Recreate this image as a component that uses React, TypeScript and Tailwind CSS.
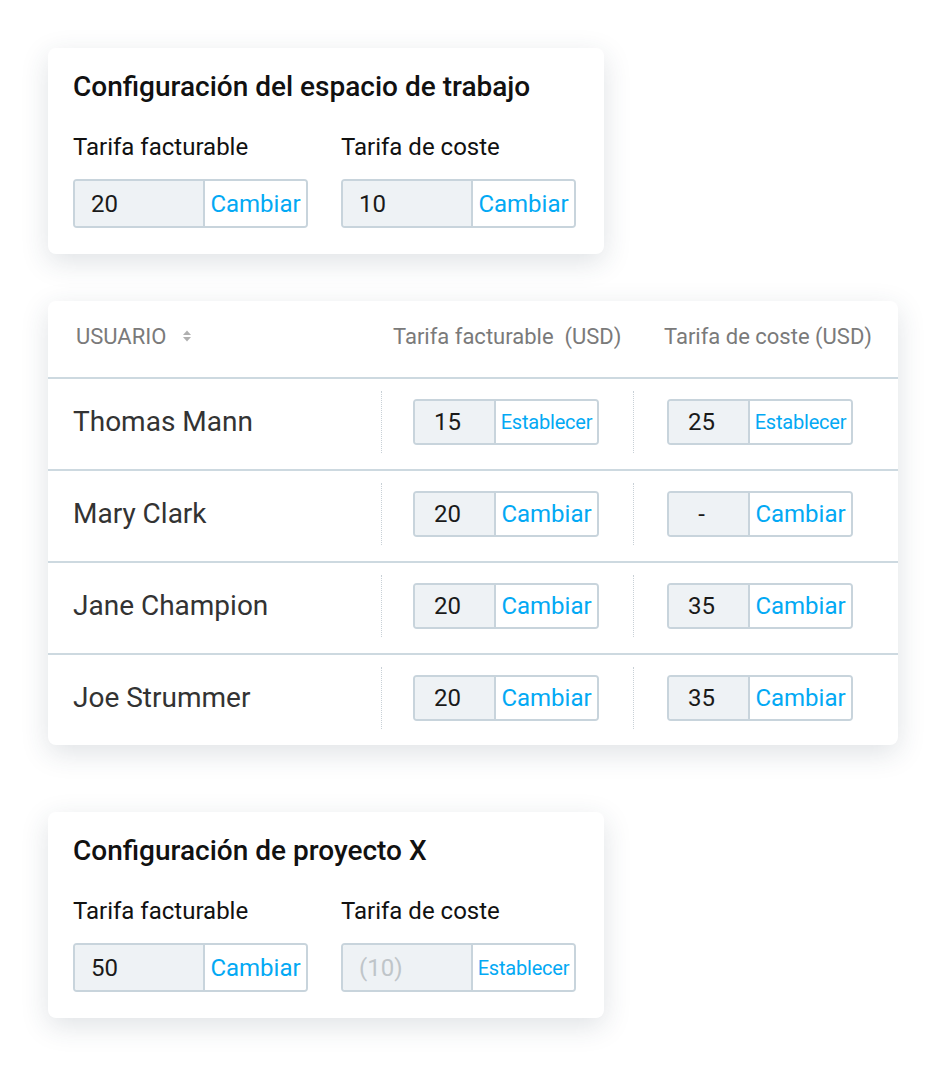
type RateInputProps = {
  value: string;
  action: "Cambiar" | "Establecer";
  muted?: boolean;
  size?: "lg" | "sm";
};

function RateInput({ value, action, muted, size = "lg" }: RateInputProps) {
  const big = size === "lg";
  return (
    <div
      className={
        big
          ? "flex h-[49px] w-[235px] overflow-hidden rounded-[4px] border-2 border-[#c8d4dc]"
          : "flex h-[46px] w-[186px] overflow-hidden rounded-[4px] border-2 border-[#c8d4dc]"
      }
    >
      <div
        className={
          big
            ? "flex w-[128px] items-center bg-[#eef2f5] pl-[16px] text-[24px]"
            : "flex w-[79px] items-center justify-center bg-[#eef2f5] pr-[14px] text-[24px]"
        }
      >
        <span className={muted ? "text-[#bfc5c9]" : "text-[#1a1a1a]"}>{value}</span>
      </div>
      <div className="flex flex-1 items-center justify-center border-l-2 border-[#c8d4dc] bg-white">
        <span
          className={
            action === "Establecer"
              ? "text-[20px] tracking-[-0.2px] text-[#03a9f4]"
              : "text-[24px] text-[#03a9f4]"
          }
        >
          {action}
        </span>
      </div>
    </div>
  );
}

type SettingsCardProps = {
  title: string;
  billable: string;
  cost: string;
  costAction: "Cambiar" | "Establecer";
  costMuted?: boolean;
};

function SettingsCard({ title, billable, cost, costAction, costMuted }: SettingsCardProps) {
  return (
    <div className="w-[556px] rounded-[8px] bg-white px-[25px] pt-[21px] pb-[26px] shadow-[0_8px_28px_rgba(40,60,80,0.15)]">
      <h2 className="text-[28px] leading-[36px] font-medium text-[#111]">{title}</h2>
      <div className="mt-[27px] flex gap-[33px]">
        <div>
          <div className="text-[24px] leading-[30px] text-[#111]">Tarifa facturable</div>
          <div className="mt-[17px]">
            <RateInput value={billable} action="Cambiar" />
          </div>
        </div>
        <div>
          <div className="text-[24px] leading-[30px] text-[#111]">Tarifa de coste</div>
          <div className="mt-[17px]">
            <RateInput value={cost} action={costAction} muted={costMuted} />
          </div>
        </div>
      </div>
    </div>
  );
}

type UserRow = {
  name: string;
  billable: string;
  billableAction: "Cambiar" | "Establecer";
  cost: string;
  costAction: "Cambiar" | "Establecer";
};

const users: UserRow[] = [
  { name: "Thomas Mann", billable: "15", billableAction: "Establecer", cost: "25", costAction: "Establecer" },
  { name: "Mary Clark", billable: "20", billableAction: "Cambiar", cost: "-", costAction: "Cambiar" },
  { name: "Jane Champion", billable: "20", billableAction: "Cambiar", cost: "35", costAction: "Cambiar" },
  { name: "Joe Strummer", billable: "20", billableAction: "Cambiar", cost: "35", costAction: "Cambiar" },
];

function SortIcon() {
  return (
    <svg width="10" height="14" viewBox="0 0 10 14" className="ml-[16px]">
      <path d="M5 1.5 L9 6 L1 6 Z" fill="#b0b0b0" />
      <path d="M5 12.5 L9 8 L1 8 Z" fill="#b0b0b0" />
    </svg>
  );
}

function UsersTable() {
  return (
    <div className="w-[850px] overflow-hidden rounded-[8px] bg-white shadow-[0_8px_28px_rgba(40,60,80,0.15)]">
      <div className="flex h-[76px] items-center pb-[6px] text-[22px] text-[#7a7a7a]">
        <div className="flex w-[333px] items-center pl-[28px]">
          USUARIO
          <SortIcon />
        </div>
        <div className="w-[283px] pl-[12px]">Tarifa facturable&nbsp; (USD)</div>
        <div>Tarifa de coste (USD)</div>
      </div>
      {users.map((u) => (
        <div key={u.name} className="flex h-[92px] items-center border-t-2 border-[#cdd9e0] pb-[4px]">
          <div className="w-[333px] pl-[25px] text-[28px] text-[#333]">{u.name}</div>
          <div className="flex h-[62px] w-[252px] items-center border-l border-dotted border-[#c8d0d6] pl-[31px]">
            <RateInput value={u.billable} action={u.billableAction} size="sm" />
          </div>
          <div className="flex h-[62px] items-center border-l border-dotted border-[#c8d0d6] pl-[33px]">
            <RateInput value={u.cost} action={u.costAction} size="sm" />
          </div>
        </div>
      ))}
    </div>
  );
}

export default function App() {
  return (
    <div
      className="min-h-[1066px] w-[946px] bg-white pt-[48px] pl-[48px]"
      style={{ fontFamily: "Roboto, 'Liberation Sans', sans-serif" }}
    >
      <SettingsCard title="Configuración del espacio de trabajo" billable="20" cost="10" costAction="Cambiar" />
      <div className="mt-[47px]">
        <UsersTable />
      </div>
      <div className="mt-[67px]">
        <SettingsCard
          title="Configuración de proyecto X"
          billable="50"
          cost="(10)"
          costAction="Establecer"
          costMuted
        />
      </div>
    </div>
  );
}
